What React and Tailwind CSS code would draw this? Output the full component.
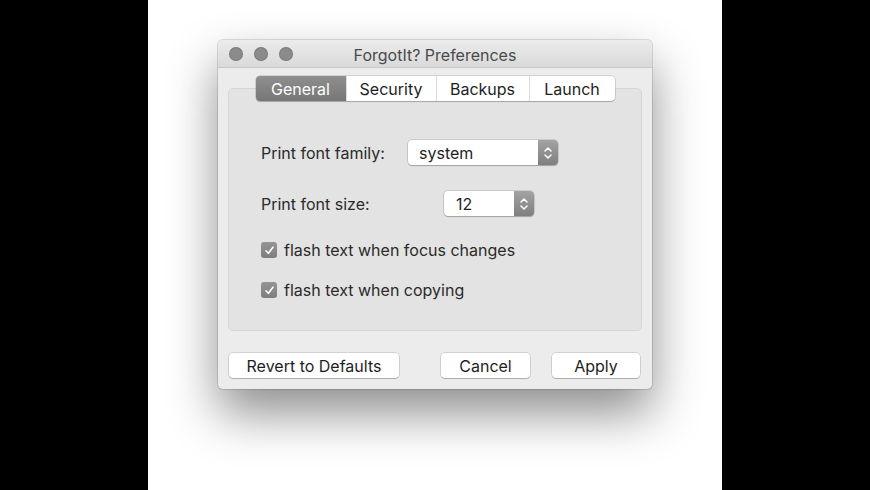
import React from "react";

function Stepper() {
  return (
    <svg width="10" height="16" viewBox="0 0 10 16" fill="none">
      <path d="M2 6 L5 3 L8 6" stroke="white" strokeWidth="1.5" strokeLinecap="round" strokeLinejoin="round" />
      <path d="M2 10 L5 13 L8 10" stroke="white" strokeWidth="1.5" strokeLinecap="round" strokeLinejoin="round" />
    </svg>
  );
}

function Popup({ value, width, pad }) {
  return (
    <div
      className="flex h-[25px] items-stretch rounded-[4px] bg-white shadow-[0_0_0_0.5px_rgba(0,0,0,0.22),0_1px_1px_rgba(0,0,0,0.2)]"
      style={{ width }}
    >
      <div className="flex flex-1 items-center text-[16px] text-[#1e1e1e]" style={{ paddingLeft: pad }}>
        {value}
      </div>
      <div className="flex w-[20px] items-center justify-center rounded-r-[4px] bg-gradient-to-b from-[#a3a3a3] to-[#7f7f7f]">
        <Stepper />
      </div>
    </div>
  );
}

function Check({ label }) {
  return (
    <div className="flex h-[20px] items-center gap-[7px]">
      <div className="flex h-[16px] w-[16px] items-center justify-center rounded-[3px] bg-gradient-to-b from-[#949494] to-[#7e7e7e]">
        <svg width="11" height="11" viewBox="0 0 11 11" fill="none">
          <path d="M2 5.8 L4.4 8.3 L9 2.2" stroke="white" strokeWidth="1.6" strokeLinecap="round" strokeLinejoin="round" />
        </svg>
      </div>
      <span className="text-[16px] text-[#2a2a2a]">{label}</span>
    </div>
  );
}

function Button({ children, width }) {
  return (
    <div
      className="flex h-[25px] items-center justify-center rounded-[4px] bg-white text-[16px] text-[#1e1e1e] shadow-[0_0_0_0.5px_rgba(0,0,0,0.22),0_1px_1px_rgba(0,0,0,0.18)]"
      style={{ width }}
    >
      {children}
    </div>
  );
}

export default function App() {
  const tabs = [
    { name: "General", w: 90 },
    { name: "Security", w: 90 },
    { name: "Backups", w: 93 },
    { name: "Launch", w: 86 },
  ];
  return (
    <div
      className="flex h-[490px] w-[870px] bg-black"
      style={{ fontFamily: "Inter, 'Liberation Sans', sans-serif" }}
    >
      <div className="w-[148px]" />
      <div className="w-[574px] bg-white pl-[70px] pt-[40px]">
        <div className="flex h-[349px] w-[434px] flex-col overflow-hidden rounded-[5px] bg-[#ececec] shadow-[0_0_0_1px_rgba(0,0,0,0.12),0_24px_50px_rgba(0,0,0,0.45)]">
          <div className="relative flex h-[28px] items-center border-b border-[#c9c9c9] bg-gradient-to-b from-[#ececec] to-[#d9d9d9]">
            <div className="flex gap-[11px] pl-[11px]">
              <div className="h-[14px] w-[14px] rounded-full bg-[#8b8b8b] shadow-[inset_0_0_0_1px_rgba(0,0,0,0.12)]" />
              <div className="h-[14px] w-[14px] rounded-full bg-[#8b8b8b] shadow-[inset_0_0_0_1px_rgba(0,0,0,0.12)]" />
              <div className="h-[14px] w-[14px] rounded-full bg-[#8b8b8b] shadow-[inset_0_0_0_1px_rgba(0,0,0,0.12)]" />
            </div>
            <div className="absolute inset-0 flex items-center justify-center pt-[2px] text-[16px] text-[#4a4a4a]">
              ForgotIt? Preferences
            </div>
          </div>
          <div className="flex flex-1 flex-col px-[10px] pt-[8px]">
            <div className="relative z-10 mx-auto -mb-[13px] flex h-[25px] rounded-[4px] bg-white shadow-[0_0_0_0.5px_rgba(0,0,0,0.22),0_1px_1px_rgba(0,0,0,0.18)]">
              {tabs.map((t, i) => (
                <div
                  key={t.name}
                  className={
                    i === 0
                      ? "flex items-center justify-center rounded-l-[4px] bg-gradient-to-b from-[#8f8f8f] to-[#767676] text-[16px] text-white"
                      : "flex items-center justify-center border-l border-[#dcdcdc] text-[16px] text-[#1e1e1e]"
                  }
                  style={{ width: t.w }}
                >
                  {t.name}
                </div>
              ))}
            </div>
            <div className="h-[243px] rounded-[5px] border border-[#d6d6d6] bg-[#e3e3e3] pl-[32px] pt-[51px]">
              <div className="flex items-center">
                <div className="w-[147px] text-[16px] text-[#2a2a2a]">Print font family:</div>
                <Popup value="system" width={150} pad={11} />
              </div>
              <div className="mt-[26px] flex items-center">
                <div className="w-[183px] text-[16px] text-[#2a2a2a]">Print font size:</div>
                <Popup value="12" width={90} pad={12} />
              </div>
              <div className="mt-[24px]">
                <Check label="flash text when focus changes" />
              </div>
              <div className="mt-[20px]">
                <Check label="flash text when copying" />
              </div>
            </div>
            <div className="mt-[22px] flex items-center">
              <div className="ml-[1px]">
                <Button width={170}>Revert to Defaults</Button>
              </div>
              <div className="ml-[42px]">
                <Button width={89}>Cancel</Button>
              </div>
              <div className="ml-[22px]">
                <Button width={88}>Apply</Button>
              </div>
            </div>
          </div>
        </div>
      </div>
      <div className="flex-1" />
    </div>
  );
}
